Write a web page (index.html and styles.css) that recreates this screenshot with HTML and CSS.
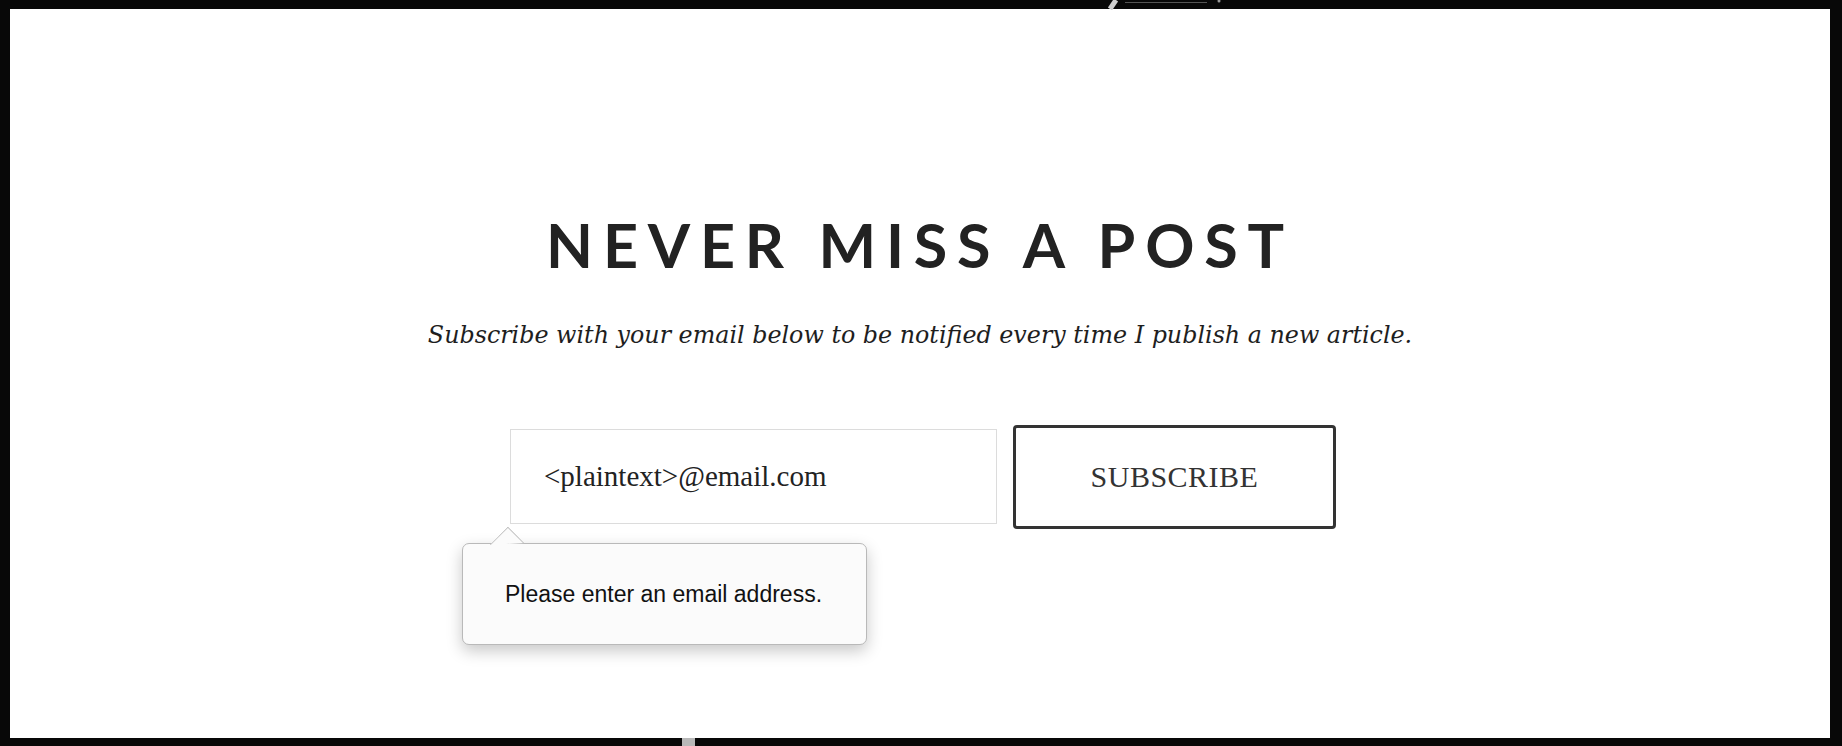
FILE: index.html
```html
<!DOCTYPE html>
<html lang="en">
<head>
<meta charset="utf-8">
<title>Never miss a post</title>
<link rel="stylesheet" href="styles.css">
</head>
<body>
<div class="frame">
  <section class="signup">
    <h2 class="signup-title">NEVER MISS A POST</h2>
    <p class="signup-lead">Subscribe with your email below to be notified every time I publish a new article.</p>
    <form class="signup-form" onsubmit="return false">
      <div class="field">
        <input class="email" type="text" value="&lt;plaintext&gt;@email.com">
        <div class="tooltip">
          <span class="tooltip-arrow"></span>
          <span class="tooltip-text">Please enter an email address.</span>
        </div>
      </div>
      <button class="subscribe" type="button">SUBSCRIBE</button>
    </form>
  </section>
</div>
<svg class="edge-top" width="130" height="10" viewBox="0 0 130 10"><path d="M9 0 L3 9" stroke="#cfcfcf" stroke-width="5" fill="none"/><path d="M18 2.5 H100" stroke="#555" stroke-width="1" fill="none"/><circle cx="112" cy="1" r="1.5" fill="#999"/></svg>
<span class="edge-bottom"></span>
</body>
</html>
```
FILE: styles.css
```css
html, body {
  margin: 0;
  padding: 0;
  height: 100%;
}
body {
  background: #080808;
  padding: 9px 12px 8px 10px;
  box-sizing: border-box;
  overflow: hidden;
  position: relative;
}
.frame {
  background: #ffffff;
  height: 100%;
  display: flex;
  justify-content: center;
}
.signup {
  display: flex;
  flex-direction: column;
  align-items: center;
  padding-top: 205px;
}
.signup-title {
  margin: 0;
  font-family: Lato, "Liberation Sans", sans-serif;
  font-weight: 700;
  font-size: 61px;
  line-height: 1;
  letter-spacing: 9.8px;
  padding-left: 0;
  color: #222222;
}
.signup-lead {
  margin: 46px 0 0;
  font-family: "DejaVu Serif", "Liberation Serif", serif;
  font-style: italic;
  font-size: 23.8px;
  line-height: 1.2;
  color: #1e1e1e;
}
.signup-form {
  margin-top: 75px;
  display: flex;
  align-items: center;
  gap: 16px;
  padding-left: 6px;
}
.field {
  position: relative;
}
.email {
  display: block;
  box-sizing: border-box;
  width: 487px;
  height: 95px;
  border: 1px solid #dcdcdc;
  padding: 0 33px;
  font-family: "Liberation Serif", serif;
  font-size: 29px;
  color: #222222;
  outline: none;
  background: #ffffff;
}
.subscribe {
  box-sizing: border-box;
  width: 323px;
  height: 104px;
  border: 3px solid #333333;
  border-radius: 4px;
  background: #ffffff;
  font-family: "Liberation Serif", serif;
  font-size: 30px;
  color: #333333;
  letter-spacing: 0.5px;
}
.tooltip {
  position: absolute;
  left: -48px;
  top: 114px;
  width: 405px;
  height: 102px;
  box-sizing: border-box;
  background: #fbfbfb;
  border: 1px solid #b9b9b9;
  border-radius: 7px;
  box-shadow: 0 6px 16px rgba(0, 0, 0, 0.22);
  display: flex;
  align-items: center;
  justify-content: center;
}
.tooltip-arrow {
  position: absolute;
  left: 31px;
  top: -13px;
  width: 25px;
  height: 25px;
  background: #fbfbfb;
  border-left: 1px solid #b9b9b9;
  border-top: 1px solid #b9b9b9;
  transform: rotate(45deg) scaleX(0.9);
  transform-origin: center;
  clip-path: polygon(0 0, 100% 0, 0 100%);
}
.tooltip-text {
  font-family: "Liberation Sans", Arial, sans-serif;
  font-size: 23px;
  color: #111111;
  padding-right: 2px;
}
.edge-top {
  position: absolute;
  left: 1107px;
  top: 0;
}
.edge-bottom {
  position: absolute;
  left: 682px;
  bottom: 0;
  width: 13px;
  height: 8px;
  background: #b8b8b8;
}
```
